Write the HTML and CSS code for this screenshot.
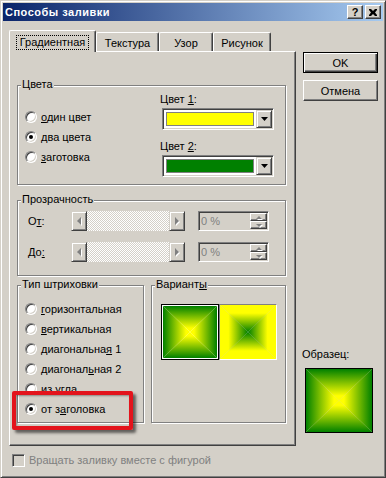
FILE: index.html
```html
<!DOCTYPE html>
<html lang="ru">
<head>
    <meta charset="UTF-8">
    <title>Способы заливки</title>
    <link rel="stylesheet" href="styles.css">
</head>
<body>
    <div class="window">
        <div class="titlebar">
            <span class="title">Способы заливки</span>
            <div class="caption-buttons">
                <button class="caption-btn">?</button>
                <button class="caption-btn">
                    <svg width="8" height="7" viewBox="0 0 8 7"><path d="M0 0h2l2 2 2-2h2v1l-2 2.5 2 2.5v1h-2l-2-2-2 2h-2v-1l2-2.5-2-2.5z" fill="#000"/></svg>
                </button>
            </div>
        </div>

        <div class="dialog-body">
            <div class="main-col">
                <!-- Zakładki -->
                <div class="tabs">
                    <div class="tab active"><span class="focus">Градиентная</span></div>
                    <div class="tab w-texture">Текстура</div>
                    <div class="tab w-pattern">Узор</div>
                    <div class="tab w-picture">Рисунок</div>
                </div>

                <div class="tab-panel">
                    <!-- Цвета -->
                    <div class="group colors">
                        <span class="group-label">Цвета</span>
                        <div class="radio-list">
                            <div class="radio-row"><span class="radio"></span><span><u>о</u>дин цвет</span></div>
                            <div class="radio-row"><span class="radio checked"></span><span>два цвета</span></div>
                            <div class="radio-row"><span class="radio"></span><span><u>з</u>аготовка</span></div>
                        </div>
                        <div class="color-pickers">
                            <div class="field-label">Цвет <u>1</u>:</div>
                            <div class="combo">
                                <div class="swatch yellow"></div>
                                <div class="drop-btn"><svg width="7" height="4" viewBox="0 0 7 4"><path d="M0 0h7l-3.5 4z" fill="#000"/></svg></div>
                            </div>
                            <div class="field-label second">Цвет <u>2</u>:</div>
                            <div class="combo">
                                <div class="swatch green"></div>
                                <div class="drop-btn"><svg width="7" height="4" viewBox="0 0 7 4"><path d="M0 0h7l-3.5 4z" fill="#000"/></svg></div>
                            </div>
                        </div>
                    </div>

                    <!-- Прозрачность -->
                    <div class="group transparency">
                        <span class="group-label">Прозрачность</span>
                        <div class="slider-row">
                            <span class="row-label">О<u>т</u>:</span>
                            <div class="scrollbar">
                                <div class="scroll-btn"><span class="arrow-left"></span></div>
                                <div class="scroll-track"></div>
                                <div class="scroll-btn"><span class="arrow-right"></span></div>
                            </div>
                            <div class="spin">
                                <span class="spin-text">0 %</span>
                                <div class="spin-btns">
                                    <div class="spin-btn"><span class="arrow-up"></span></div>
                                    <div class="spin-btn"><span class="arrow-down"></span></div>
                                </div>
                            </div>
                        </div>
                        <div class="slider-row second">
                            <span class="row-label">До<u>:</u></span>
                            <div class="scrollbar">
                                <div class="scroll-btn"><span class="arrow-left"></span></div>
                                <div class="scroll-track"></div>
                                <div class="scroll-btn"><span class="arrow-right"></span></div>
                            </div>
                            <div class="spin">
                                <span class="spin-text">0 %</span>
                                <div class="spin-btns">
                                    <div class="spin-btn"><span class="arrow-up"></span></div>
                                    <div class="spin-btn"><span class="arrow-down"></span></div>
                                </div>
                            </div>
                        </div>
                    </div>

                    <div class="bottom-row">
                        <!-- Тип штриховки -->
                        <div class="group shading">
                            <span class="group-label">Тип штриховки</span>
                            <div class="radio-row"><span class="radio"></span><span><u>г</u>оризонтальная</span></div>
                            <div class="radio-row"><span class="radio"></span><span><u>в</u>ертикальная</span></div>
                            <div class="radio-row"><span class="radio"></span><span>диагональна<u>я</u> 1</span></div>
                            <div class="radio-row"><span class="radio"></span><span>диагонал<u>ь</u>ная 2</span></div>
                            <div class="radio-row"><span class="radio"></span><span>из у<u>г</u>ла</span></div>
                            <div class="radio-row"><span class="radio checked"></span><span>от з<u>а</u>головка</span></div>
                            <div class="highlight"></div>
                        </div>

                        <!-- Варианты -->
                        <div class="group variants">
                            <span class="group-label">Вариант<u>ы</u></span>
                            <div class="tile selected">
                                <svg viewBox="0 0 100 100" preserveAspectRatio="none">
                                    <defs>
                                        <linearGradient id="t1v" gradientUnits="userSpaceOnUse" x1="0" y1="0" x2="0" y2="50" spreadMethod="reflect">
                                            <stop offset="0" stop-color="#008000"/><stop offset="0.85" stop-color="#ffff00"/>
                                        </linearGradient>
                                        <linearGradient id="t1h" gradientUnits="userSpaceOnUse" x1="0" y1="0" x2="50" y2="0" spreadMethod="reflect">
                                            <stop offset="0" stop-color="#008000"/><stop offset="0.85" stop-color="#ffff00"/>
                                        </linearGradient>
                                    </defs>
                                    <path d="M0 0H100L50 50ZM0 100H100L50 50Z" fill="url(#t1v)"/>
                                    <path d="M0 0V100L50 50ZM100 0V100L50 50Z" fill="url(#t1h)"/>
                                </svg>
                            </div>
                            <div class="tile">
                                <svg viewBox="0 0 100 100" preserveAspectRatio="none">
                                    <defs>
                                        <linearGradient id="t2v" gradientUnits="userSpaceOnUse" x1="0" y1="0" x2="0" y2="50" spreadMethod="reflect">
                                            <stop offset="0" stop-color="#ffff00"/><stop offset="0.3" stop-color="#ffff00"/><stop offset="1" stop-color="#008000"/>
                                        </linearGradient>
                                        <linearGradient id="t2h" gradientUnits="userSpaceOnUse" x1="0" y1="0" x2="50" y2="0" spreadMethod="reflect">
                                            <stop offset="0" stop-color="#ffff00"/><stop offset="0.3" stop-color="#ffff00"/><stop offset="1" stop-color="#008000"/>
                                        </linearGradient>
                                    </defs>
                                    <path d="M0 0H100L50 50ZM0 100H100L50 50Z" fill="url(#t2v)"/>
                                    <path d="M0 0V100L50 50ZM100 0V100L50 50Z" fill="url(#t2h)"/>
                                </svg>
                            </div>
                        </div>
                    </div>
                </div>

                <label class="checkbox-row"><span class="checkbox"></span>Вращать заливку вместе с фигурой</label>
            </div>

            <div class="side-col">
                <button class="btn default">OK</button>
                <button class="btn cancel">Отмена</button>
                <div class="sample-label">Образец:</div>
                <div class="sample">
                    <svg viewBox="0 0 100 100" preserveAspectRatio="none">
                        <defs>
                            <linearGradient id="sv" gradientUnits="userSpaceOnUse" x1="0" y1="0" x2="0" y2="50" spreadMethod="reflect">
                                <stop offset="0" stop-color="#008000"/><stop offset="0.85" stop-color="#ffff00"/>
                            </linearGradient>
                            <linearGradient id="sh" gradientUnits="userSpaceOnUse" x1="0" y1="0" x2="50" y2="0" spreadMethod="reflect">
                                <stop offset="0" stop-color="#008000"/><stop offset="0.85" stop-color="#ffff00"/>
                            </linearGradient>
                        </defs>
                        <path d="M0 0H100L50 50ZM0 100H100L50 50Z" fill="url(#sv)"/>
                        <path d="M0 0V100L50 50ZM100 0V100L50 50Z" fill="url(#sh)"/>
                    </svg>
                </div>
            </div>
        </div>
    </div>
</body>
</html>
```

FILE: styles.css
```css
body {
    margin: 0;
    background: #d4d0c8;
    font-family: "Liberation Sans", Arial, sans-serif;
    font-size: 11px;
    line-height: 13px;
    color: #000;
}

u {
    text-decoration: underline;
    text-underline-offset: 1px;
}

.window {
    width: 386px;
    height: 478px;
    box-sizing: border-box;
    border: 1px solid;
    border-color: #d4d0c8 #404040 #404040 #d4d0c8;
    box-shadow: inset 1px 1px 0 #fff, inset -1px -1px 0 #808080;
    padding: 2px;
    background: #d4d0c8;
}

.titlebar {
    height: 18px;
    background: linear-gradient(to right, #0a246a, #a6caf0);
    display: flex;
    align-items: center;
    justify-content: space-between;
    padding: 0 2px;
}

.title {
    color: #fff;
    font-weight: bold;
    letter-spacing: 0.5px;
}

.caption-buttons {
    display: flex;
    gap: 2px;
}

.caption-btn {
    width: 16px;
    height: 14px;
    padding: 0;
    box-sizing: border-box;
    background: #d4d0c8;
    border: 1px solid;
    border-color: #fff #404040 #404040 #fff;
    box-shadow: inset -1px -1px 0 #808080;
    font: bold 11px/11px "Liberation Sans", Arial, sans-serif;
    display: flex;
    align-items: center;
    justify-content: center;
}

.dialog-body {
    display: flex;
    padding: 9px 0 0 6px;
}

.main-col {
    width: 287px;
}

/* Zakładki */
.tabs {
    display: flex;
    align-items: flex-end;
    height: 21px;
}

.tab {
    box-sizing: border-box;
    height: 19px;
    background: #d4d0c8;
    border-top: 1px solid #fff;
    border-left: 1px solid #fff;
    border-right: 1px solid #404040;
    box-shadow: inset -1px 0 0 #808080;
    border-radius: 2px 2px 0 0;
    padding-top: 4px;
    text-align: center;
}

.tab.active {
    width: 87px;
    height: 22px;
    margin-bottom: -1px;
    padding-top: 4px;
    position: relative;
    z-index: 1;
}

.tab .focus {
    display: inline-block;
    border: 1px dotted #000;
    padding: 0 3px;
}

.tab.w-texture { width: 63px; }
.tab.w-pattern { width: 54px; }
.tab.w-picture { width: 58px; }

.tab-panel {
    height: 395px;
    box-sizing: border-box;
    border: 1px solid;
    border-color: #fff #404040 #404040 #fff;
    box-shadow: inset -1px -1px 0 #808080;
    padding: 33px 0 0 7px;
}

/* Grupy */
.group {
    position: relative;
    box-sizing: border-box;
    width: 269px;
    border: 1px solid #808080;
    box-shadow: inset 1px 1px 0 #fff, 1px 1px 0 #fff;
}

.group-label {
    position: absolute;
    top: -8px;
    left: 3px;
    padding: 0 1px;
    background: #d4d0c8;
}

.colors {
    height: 100px;
    display: flex;
    align-items: flex-start;
    padding: 7px 0 0 7px;
}

.radio-list {
    width: 135px;
    margin-top: 14px;
}

.radio-row {
    height: 20px;
    display: flex;
    align-items: center;
    gap: 4px;
}

.radio {
    width: 12px;
    height: 12px;
    box-sizing: border-box;
    border-radius: 50%;
    background: #fff;
    border: 1px solid;
    border-color: #808080 #fff #fff #808080;
    box-shadow: inset 1px 1px 0 #404040, inset -1px -1px 0 #d4d0c8;
    display: flex;
    align-items: center;
    justify-content: center;
}

.radio.checked::after {
    content: "";
    width: 4px;
    height: 4px;
    border-radius: 50%;
    background: #000;
}

.color-pickers {
    width: 114px;
}

.field-label.second {
    margin-top: 10px;
}

.combo {
    width: 112px;
    height: 22px;
    margin: 2px 0 0 2px;
    box-sizing: border-box;
    border: 1px solid;
    border-color: #808080 #fff #fff #808080;
    box-shadow: inset 1px 1px 0 #404040, inset -1px -1px 0 #d4d0c8;
    padding: 1px;
    background: #fff;
    display: flex;
}

.swatch {
    flex: 1;
    margin: 2px;
    border: 1px solid #808080;
}

.swatch.yellow { background: #ffff00; }
.swatch.green { background: #008000; }

.drop-btn {
    width: 16px;
    box-sizing: border-box;
    background: #d4d0c8;
    border: 1px solid;
    border-color: #d4d0c8 #404040 #404040 #d4d0c8;
    box-shadow: inset 1px 1px 0 #fff, inset -1px -1px 0 #808080;
    display: flex;
    align-items: center;
    justify-content: center;
}

.transparency {
    height: 76px;
    margin-top: 15px;
    padding: 10px 0 0 10px;
}

.slider-row {
    display: flex;
    align-items: center;
    height: 20px;
}

.slider-row.second {
    margin-top: 11px;
}

.row-label {
    width: 43px;
}

.scrollbar {
    width: 114px;
    height: 20px;
    display: flex;
}

.scroll-btn {
    width: 16px;
    box-sizing: border-box;
    background: #d4d0c8;
    border: 1px solid;
    border-color: #d4d0c8 #404040 #404040 #d4d0c8;
    box-shadow: inset 1px 1px 0 #fff, inset -1px -1px 0 #808080;
    display: flex;
    align-items: center;
    justify-content: center;
}

.scroll-track {
    flex: 1;
    background: repeating-conic-gradient(#fff 0 25%, #d4d0c8 0 50%) 0 0 / 2px 2px;
}

.arrow-left,
.arrow-right {
    width: 0;
    height: 0;
    border-top: 4px solid transparent;
    border-bottom: 4px solid transparent;
    filter: drop-shadow(1px 1px 0 #fff);
}

.arrow-left { border-right: 4px solid #808080; }
.arrow-right { border-left: 4px solid #808080; }

.spin {
    width: 71px;
    height: 20px;
    margin-left: 13px;
    box-sizing: border-box;
    border: 1px solid;
    border-color: #808080 #fff #fff #808080;
    box-shadow: inset 1px 1px 0 #404040, inset -1px -1px 0 #d4d0c8;
    padding: 1px;
    display: flex;
}

.spin-text {
    flex: 1;
    color: #808080;
    padding-left: 1px;
    line-height: 16px;
}

.spin-btns {
    width: 17px;
    display: flex;
    flex-direction: column;
}

.spin-btn {
    flex: 1;
    box-sizing: border-box;
    background: #d4d0c8;
    border: 1px solid;
    border-color: #fff #404040 #404040 #fff;
    box-shadow: inset -1px -1px 0 #808080;
    display: flex;
    align-items: center;
    justify-content: center;
}

.arrow-up,
.arrow-down {
    width: 0;
    height: 0;
    border-left: 3px solid transparent;
    border-right: 3px solid transparent;
    filter: drop-shadow(1px 1px 0 #fff);
}

.arrow-up { border-bottom: 3px solid #808080; }
.arrow-down { border-top: 3px solid #808080; }

.bottom-row {
    display: flex;
    gap: 7px;
    margin-top: 9px;
}

.shading {
    width: 127px;
    height: 138px;
    padding: 13px 0 0 7px;
}

.variants {
    width: 135px;
    height: 138px;
    padding: 18px 0 0 9px;
    display: flex;
    align-items: flex-start;
}

.tile {
    width: 58px;
    height: 56px;
    box-sizing: border-box;
    border: 1px solid;
    border-color: #808080 #fff #fff #808080;
}

.tile.selected {
    border-color: #000;
    padding: 1px;
    background: #fff;
}

.tile svg,
.sample svg {
    display: block;
    width: 100%;
    height: 100%;
}

/* Czerwona ramka */
.highlight {
    position: absolute;
    left: -6px;
    top: 105px;
    width: 121px;
    height: 39px;
    box-sizing: border-box;
    border: 4px solid #e3141c;
    border-radius: 2px;
    box-shadow: 3px 3px 3px rgba(0, 0, 0, 0.55), inset 1px 1px 2px rgba(0, 0, 0, 0.35);
}

.checkbox-row {
    display: flex;
    align-items: center;
    gap: 4px;
    margin: 8px 0 0 3px;
    color: #808080;
}

.checkbox {
    width: 13px;
    height: 13px;
    box-sizing: border-box;
    border: 1px solid;
    border-color: #808080 #fff #fff #808080;
    box-shadow: inset 1px 1px 0 #404040, inset -1px -1px 0 #d4d0c8;
    background: #d4d0c8;
}

.side-col {
    margin-left: 7px;
    padding-top: 22px;
    display: flex;
    flex-direction: column;
    align-items: flex-start;
}

.btn {
    width: 75px;
    height: 21px;
    padding: 0;
    box-sizing: border-box;
    background: #d4d0c8;
    border: 1px solid;
    border-color: #fff #404040 #404040 #fff;
    box-shadow: inset -1px -1px 0 #808080;
    font: 11px "Liberation Sans", Arial, sans-serif;
    color: #000;
}

.btn.default {
    border-color: #000;
    box-shadow: inset 1px 1px 0 #fff, inset -1px -1px 0 #404040, inset -2px -2px 0 #808080;
}

.btn.cancel {
    margin-top: 7px;
}

.sample-label {
    margin: 247px 0 0 -1px;
}

.sample {
    width: 68px;
    height: 65px;
    margin: 7px 0 0 2px;
    box-sizing: border-box;
    border: 1px solid #000;
}
```
